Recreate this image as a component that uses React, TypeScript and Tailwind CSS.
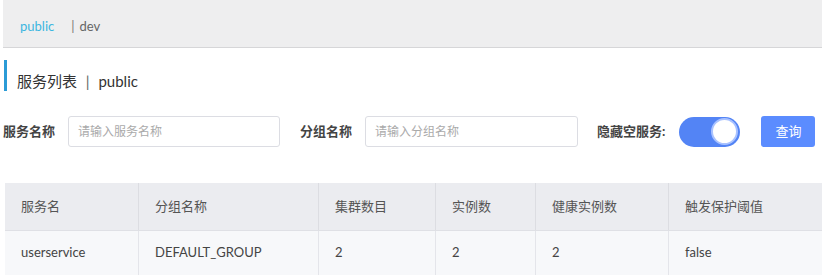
import React from "react";

const font = { fontFamily: 'Lato, "Noto Sans CJK SC", "Noto Sans", sans-serif' };

export default function App() {
  const headers = ["服务名", "分组名称", "集群数目", "实例数", "健康实例数", "触发保护阈值"];
  const row = ["userservice", "DEFAULT_GROUP", "2", "2", "2", "false"];
  const widths = ["w-[134px]", "w-[180px]", "w-[117px]", "w-[100px]", "w-[133px]", "flex-1"];
  return (
    <div className="w-[822px] h-[275px] bg-white overflow-hidden" style={font}>
      <div className="ml-[3px] h-[48px] bg-[#eeeeef] border-b border-[#d6d6d8] flex items-center pl-[17px] pt-[7px] text-[13px]">
        <span className="text-[#3cb6e0]">public</span>
        <span className="ml-[17px] text-[#777]">|</span>
        <span className="ml-[5px] text-[#666]">dev</span>
      </div>
      <div className="mt-[12px] ml-[4px] flex items-center h-[31px]">
        <div className="w-[3px] h-[31px] bg-[#2b9bd6]" />
        <span className="ml-[10px] pt-[12px] text-[15px] text-[#333]">服务列表 <span className="mx-[5px] text-[#666]">|</span> public</span>
      </div>
      <div className="mt-[25px] flex items-center h-[31px] text-[13px]">
        <span className="ml-[3px] font-bold text-[#444]">服务名称</span>
        <div className="ml-[13px] w-[212px] h-[31px] border border-[#dcdde3] rounded-[3px] flex items-center pl-[9px] text-[#aaa] text-[12px]">请输入服务名称</div>
        <span className="ml-[20px] font-bold text-[#444]">分组名称</span>
        <div className="ml-[13px] w-[213px] h-[31px] border border-[#dcdde3] rounded-[3px] flex items-center pl-[9px] text-[#aaa] text-[12px]">请输入分组名称</div>
        <span className="ml-[19px] font-bold text-[#444]">隐藏空服务:</span>
        <div className="ml-[14px] w-[61px] h-[30px] rounded-full bg-[#5384f5] flex items-center justify-end pr-[2px]">
          <div className="w-[27px] h-[27px] rounded-full bg-white border-2 border-[#a9c2ff]" />
        </div>
        <div className="ml-[21px] w-[54px] h-[31px] rounded-[3px] bg-[#5b8cff] text-white flex items-center justify-center text-[13px]">查询</div>
      </div>
      <div className="mt-[36px] ml-[5px] text-[13px] text-[#444]">
        <div className="flex h-[48px] bg-[#ebecf0] border-b border-[#dfe0e5]">
          {headers.map((h, i) => (
            <div key={i} className={`${widths[i]} flex items-center pl-[16px] text-[#555] ${i < 5 ? "border-r border-[#dcdde2]" : ""}`}>{h}</div>
          ))}
        </div>
        <div className="flex h-[44px] bg-[#f7f8fa]">
          {row.map((c, i) => (
            <div key={i} className={`${widths[i]} flex items-center pl-[16px] text-[#444] ${i < 5 ? "border-r border-[#e4e5ea]" : ""}`}>{c}</div>
          ))}
        </div>
      </div>
    </div>
  );
}
